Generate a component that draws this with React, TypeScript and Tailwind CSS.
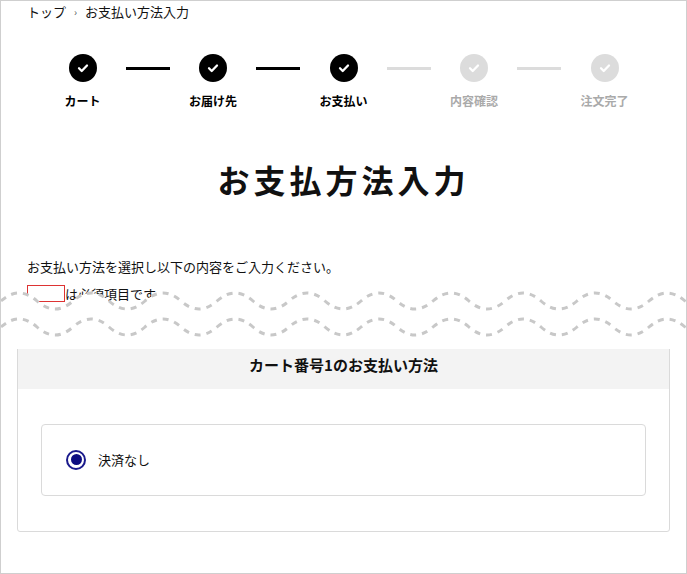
import React from 'react';

const font = { fontFamily: '"Noto Sans CJK JP", "Noto Sans", sans-serif' };

const steps = [
    { label: 'カート', done: true },
    { label: 'お届け先', done: true },
    { label: 'お支払い', done: true },
    { label: '内容確認', done: false },
    { label: '注文完了', done: false },
];

const Check = ({ on }: { on: boolean }) => (
    <div className={`w-[28px] h-[28px] rounded-full flex items-center justify-center ${on ? 'bg-black' : 'bg-[#dcdcdc]'}`}>
        <svg width="14" height="14" viewBox="0 0 14 14" fill="none">
            <path d="M3 7.3l2.7 2.7L11 4.5" stroke="white" strokeWidth="2.3" strokeLinecap="round" strokeLinejoin="round" />
        </svg>
    </div>
);

// wave path repeated across the width
const wave = (y: number, amp: number, period: number, width: number) => {
    let d = `M0 ${y}`;
    for (let x = 0; x < width; x += period) {
        d += ` Q${x + period / 4} ${y - amp * 2} ${x + period / 2} ${y} T${x + period} ${y}`;
    }
    return d;
};

export default function App() {
    const W = 687;
    const top = wave(16, 8, 72, W + 72);
    const bottom = wave(42, 8, 72, W + 72);
    const fill = `${top} L${W + 80} 64 L0 64 Z`;
    return (
        <div style={font} className="w-[687px] h-[574px] border border-[#cfcfcf] bg-white relative overflow-hidden text-[#111]">
            <div className="px-[26px] pt-[1px] text-[13px] flex items-center gap-[8px]">
                <span>トップ</span>
                <span className="text-[10px] text-[#555]">›</span>
                <span>お支払い方法入力</span>
            </div>

            <div className="mt-[32px] flex justify-center">
                {steps.map((s, i) => (
                    <div key={i} className="relative w-[130.5px] flex flex-col items-center">
                        {i > 0 && (
                            <div className={`absolute top-[13px] left-[-22px] w-[44px] h-[3px] ${s.done ? 'bg-black' : 'bg-[#dcdcdc]'}`} />
                        )}
                        <Check on={s.done} />
                        <div className={`mt-[10px] text-[12px] font-bold ${s.done ? 'text-black' : 'text-[#aaa]'}`}>{s.label}</div>
                    </div>
                ))}
            </div>

            <h1 className="mt-[45px] text-center text-[32px] font-bold tracking-[4px]">お支払方法入力</h1>

            <p className="mt-[54px] px-[26px] text-[13px]">お支払い方法を選択し以下の内容をご入力ください。</p>
            <p className="mt-[8px] px-[26px] text-[13px] flex items-center">
                <span className="inline-block w-[38px] h-[17px] border border-[#d33]" />
                <span>は必須項目です。</span>
            </p>

            <svg className="absolute left-0 top-[284px]" width={W} height="64" viewBox={`0 0 ${W} 64`}>
                <path d={fill} fill="white" />
                <path d={top} stroke="#c8c8c8" strokeWidth="3" strokeDasharray="6 6" fill="none" />
                <path d={bottom} stroke="#c8c8c8" strokeWidth="3" strokeDasharray="6 6" fill="none" />
            </svg>

            <div className="mx-[16px] mt-[38px] border border-[#dadada] rounded-[3px] pb-[35px]">
                <div className="h-[46px] bg-[#f3f3f3] flex items-center justify-center text-[15px] font-bold">カート番号1のお支払い方法</div>
                <div className="mx-[23px] mt-[35px] h-[72px] border border-[#dadada] rounded-[4px] flex items-center px-[24px] gap-[12px]">
                    <div className="w-[20px] h-[20px] rounded-full border-2 border-[#1a1a8c] flex items-center justify-center">
                        <div className="w-[11px] h-[11px] rounded-full bg-[#0d0d80]" />
                    </div>
                    <span className="text-[13px]">決済なし</span>
                </div>
            </div>
        </div>
    );
}
